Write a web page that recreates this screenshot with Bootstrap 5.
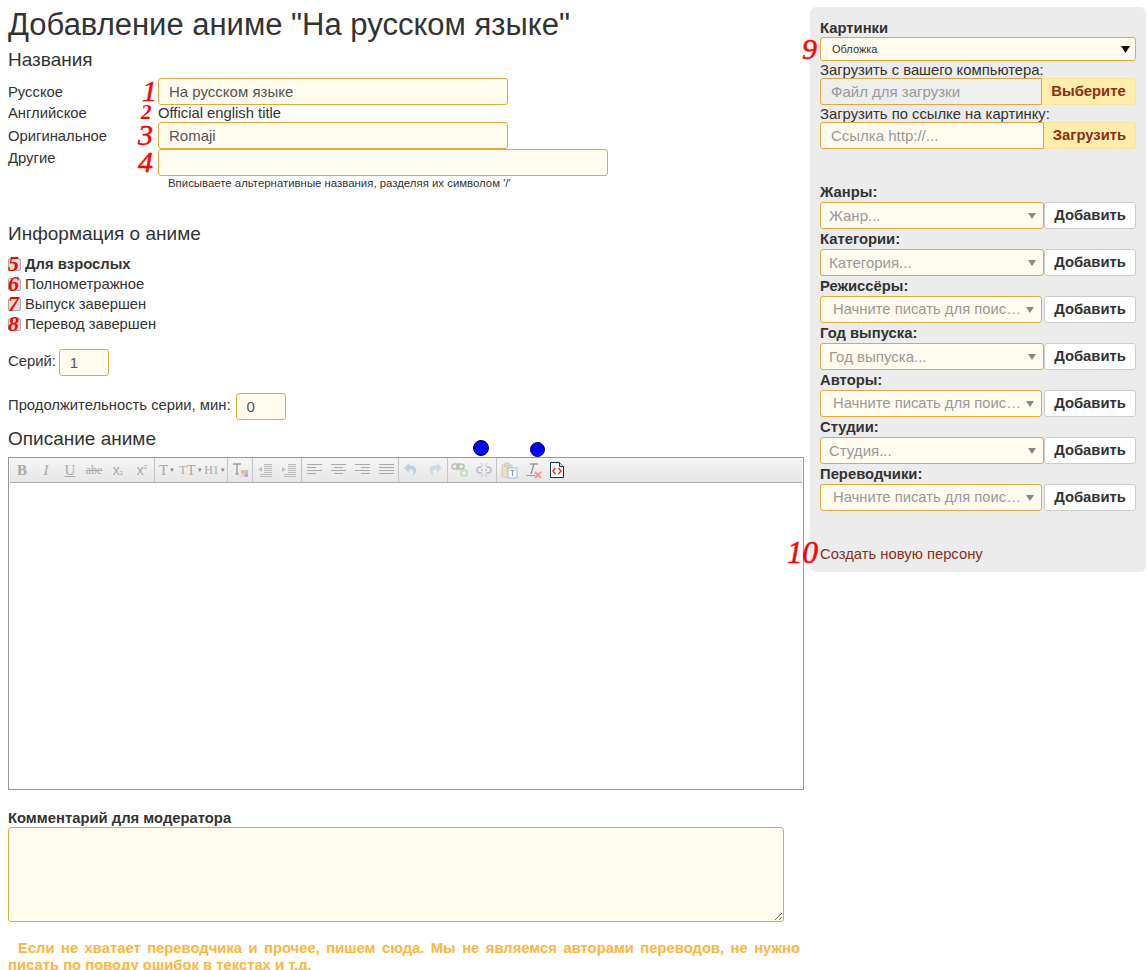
<!DOCTYPE html>
<html lang="ru">
<head>
  <meta charset="UTF-8" />
  <meta name="viewport" content="width=device-width, initial-scale=1" />
  <title>Добавление аниме</title>
  <link href="https://cdn.jsdelivr.net/npm/bootstrap@5.3.0/dist/css/bootstrap.min.css" rel="stylesheet" />
  <style>
    html, body { height: 970px; overflow: hidden; }
    body {
      font-family: "Liberation Sans", Arial, sans-serif;
      font-size: 14.8px;
      line-height: 20px;
      color: #333;
      background: #fff;
    }
    .page-wrap { width: 1147px; }
    .main-col { width: 796px; margin-left: 8px; flex: none; }
    .side-col {
      width: 336px; height: 565px; margin: 7px 0 0 6px; flex: none;
      background: #ececec; border-radius: 6px; padding: 10px 10px 0;
    }
    h1.page-title { font-size: 31px; line-height: 36px; font-weight: 400; margin: 7px 0 0; }
    .sub-title { font-size: 19px; line-height: 20px; font-weight: 400; }
    .head-names { margin: 7px 0 0; }
    .head-info { margin: 33px 0 0; }
    .head-desc { margin: 9px 0 0; }
    .fld, .fld:focus {
      background-color: #fffbef; border: 1px solid #e5a83f; border-radius: 3px;
      height: 27px; min-height: 27px; padding: 0 10px; font-size: 15px; line-height: 25px; color: #555; box-shadow: none;
    }
    .fld::placeholder { color: #999; }
    .name-row { position: relative; }
    .name-first { margin-top: 8px; }
    .name-text { height: 17px; line-height: 19px; }
    .name-label { width: 150px; flex: none; }
    .name-up { margin-top: -1px; }
    .w-short { width: 350px; flex: none !important; }
    .w-long { width: 450px; flex: none !important; }
    .num-field { width: 50px; flex: none; }
    .hint-text { font-size: 11.4px; line-height: 14px; margin: 0 0 0 160px; height: 15px; }
    .red-num { position: absolute; color: #f00; font-family: "Liberation Serif", serif; font-style: italic; font-weight: 400; line-height: 1; pointer-events: none; -webkit-text-stroke: .5px #f00; }
    .n1 { left: 134px; top: -2px; font-size: 30px; }
    .n2 { left: 133px; top: -3px; font-size: 21px; font-weight: 700; -webkit-text-stroke: 0; }
    .n3 { left: 130px; top: -2px; font-size: 30px; }
    .n4 { left: 130px; top: -2px; font-size: 30px; }
    .n5, .n6, .n7, .n8 { left: 0; top: -1px; font-size: 22px; font-weight: 700; -webkit-text-stroke: 0; }
    .n9 { left: -18px; top: -3px; font-size: 30px; }
    .n10 { left: -33px; top: -8px; font-size: 31px; }
    .chk-list { margin-top: 10px; }
    .chk-row { display: flex; align-items: center; height: 20px; position: relative; }
    .chk-box { width: 13px; height: 13px; margin: 0 4px 0 0; background: #ddd; border: 1px solid #aaa; border-radius: 2px; flex: none; }
    .ep-row { margin-top: 15px; gap: 3px; }
    .dur-row { margin-top: 17px; gap: 5px; }
    .ep-row span, .dur-row span { margin-bottom: 4px; }
    .ed-wrap { position: relative; height: 333px; width: 796px; margin-top: 8px; border: 1px solid #999; }
    .ed-bar { height: 25px; margin: 0 1px; display: flex; align-items: center; border-bottom: 1px solid #aaa; background: linear-gradient(#f6f6f6, #e6e6e6); }
    .ed-btn { width: 24px; height: 24px; display: flex; align-items: center; justify-content: center; flex: none; color: #a8a8a8; line-height: 1; }
    .ed-btn svg { display: block; }
    .ed-sep { width: 1px; height: 24px; background: #c4c4c4; flex: none; }
    .ico-serif { font-family: "Liberation Serif", serif; font-size: 15px; }
    .ico-sm { font-size: 12px; }
    .ico-x { font-size: 14px; }
    .ico-sub { font-size: 6px; align-self: flex-end; margin-bottom: 6px; }
    .ico-sup { font-size: 6px; align-self: flex-start; margin-top: 6px; }
    .ico-caret { font-size: 6px; margin-left: 1px; color: #888; }
    .blue-dot { position: absolute; border-radius: 50%; background: #00f; border: 1px solid #003; }
    .dot-a { width: 16px; height: 16px; left: 464px; top: -18px; }
    .dot-b { width: 15px; height: 15px; left: 521px; top: -16px; }
    .mod-label { font-weight: 700; line-height: 16px; margin: 20px 0 1px; }
    .mod-area, .mod-area:focus { width: 776px; height: 95px; background: #fffbef; border: 1px solid #e5a83f; border-radius: 3px; box-shadow: none; display: block; }
    .warn-text { margin: 18px 0 0; width: 792px; color: #fdb63f; font-weight: 700; line-height: 17px; text-align: justify; text-indent: 10px; }
    .side-head { font-weight: 700; line-height: 20px; height: 20px; }
    .side-first { padding-top: 1px; }
    .side-line { line-height: 19px; height: 17px; position: relative; }
    .pick-wrap { position: relative; }
    .pick-sel, .pick-sel:focus {
      background-color: #fffbef; border: 1px solid #e5a83f; border-radius: 3px; box-shadow: none;
      height: 27px; font-size: 15px; color: #999; padding: 0 18px 0 8px; line-height: 25px;
      background-image: url("data:image/svg+xml,%3Csvg xmlns='http://www.w3.org/2000/svg' width='8' height='6'%3E%3Cpath d='M0 0h8L4 6z' fill='%23888'/%3E%3C/svg%3E");
      background-repeat: no-repeat; background-position: right 7px center; background-size: 8px 6px;
    }
    .pick-sel.top-sel, .pick-sel.top-sel:focus {
      height: 24px; line-height: 22px; font-size: 11px; color: #333; padding-left: 11px;
      background-image: url("data:image/svg+xml,%3Csvg xmlns='http://www.w3.org/2000/svg' width='9' height='7'%3E%3Cpath d='M0 0h9L4.500 7z' fill='%23111'/%3E%3C/svg%3E");
      background-size: 9px 7px; background-position: right 5px center;
    }
    .pick-sel.search-sel, .pick-sel.search-sel:focus { padding-left: 12px; font-size: 14.8px; }
    .btn-add, .btn-add:hover {
      width: 92px; height: 27px; padding: 0; background: #fff; border: 1px solid #ccc; border-radius: 3px;
      font-size: 14.8px; font-weight: 700; color: #333; line-height: 25px; flex: none;
    }
    .btn-load, .btn-load:hover {
      height: 27px; padding: 0; background: #ffeeaa; border: 1px solid #fbe3a0; border-radius: 3px;
      font-size: 14.8px; font-weight: 700; color: #8b2e16; line-height: 25px; flex: none;
    }
    .w-95 { width: 95px; }
    .w-93 { width: 93px; }
    .input-group .fld { position: relative; z-index: 5; }
    .inp-disabled, .inp-disabled:focus { background-color: #eee; }
    .new-person { color: #8b2e16; text-decoration: none; }
    .search-gap { gap: 2px; }
    .spacer-33 { height: 33px; }
    .spacer-34 { height: 34px; }
  </style>
</head>
<body class="m-0">
  <div class="page-wrap d-flex align-items-start">
    <div class="main-col">
      <h1 class="page-title">Добавление аниме "На русском языке"</h1>
      <h2 class="sub-title head-names">Названия</h2>

      <div class="name-row name-first d-flex align-items-center">
        <div class="name-label">Русское</div>
        <input class="form-control fld w-short" value="На русском языке" />
        <span class="red-num n1">1</span>
      </div>
      <div class="name-row name-text d-flex align-items-center">
        <div class="name-label">Английское</div>
        <div>Official english title</div>
        <span class="red-num n2">2</span>
      </div>
      <div class="name-row d-flex align-items-center">
        <div class="name-label">Оригинальное</div>
        <input class="form-control fld w-short" value="Romaji" />
        <span class="red-num n3">3</span>
      </div>
      <div class="name-row d-flex align-items-start">
        <div class="name-label name-up">Другие</div>
        <input class="form-control fld w-long" />
        <span class="red-num n4">4</span>
      </div>
      <p class="hint-text">Вписываете альтернативные названия, разделяя их символом '/'</p>

      <h2 class="sub-title head-info">Информация о аниме</h2>
      <div class="chk-list">
        <div class="chk-row fw-bold"><span class="chk-box"></span>Для взрослых<span class="red-num n5">5</span></div>
        <div class="chk-row"><span class="chk-box"></span>Полнометражное<span class="red-num n6">6</span></div>
        <div class="chk-row"><span class="chk-box"></span>Выпуск завершен<span class="red-num n7">7</span></div>
        <div class="chk-row"><span class="chk-box"></span>Перевод завершен<span class="red-num n8">8</span></div>
      </div>

      <div class="ep-row d-flex align-items-center">
        <span>Серий:</span>
        <input class="form-control fld num-field" value="1" />
      </div>
      <div class="dur-row d-flex align-items-center">
        <span>Продолжительность серии, мин:</span>
        <input class="form-control fld num-field" value="0" />
      </div>

      <h2 class="sub-title head-desc">Описание аниме</h2>
      <div class="ed-wrap">
        <span class="blue-dot dot-a"></span>
        <span class="blue-dot dot-b"></span>
        <div class="ed-bar">
          <span class="ed-btn ico-serif fw-bold">B</span>
          <span class="ed-btn ico-serif fst-italic">I</span>
          <span class="ed-btn ico-serif text-decoration-underline">U</span>
          <span class="ed-btn ico-serif ico-sm text-decoration-line-through">abe</span>
          <span class="ed-btn ico-x">x<span class="ico-sub">2</span></span>
          <span class="ed-btn ico-x">x<span class="ico-sup">2</span></span>
          <span class="ed-sep"></span>
          <span class="ed-btn ico-serif">T<span class="ico-caret">▼</span></span>
          <span class="ed-btn ico-serif"><span class="ico-sm">T</span>T<span class="ico-caret">▼</span></span>
          <span class="ed-btn ico-serif ico-sm">H1<span class="ico-caret">▼</span></span>
          <span class="ed-sep"></span>
          <span class="ed-btn">
            <svg width="18" height="16" viewBox="0 0 18 16"><rect x="10" y="8" width="7" height="7" fill="#eee"/><rect x="10" y="8" width="3.500" height="3.500" fill="#fa8"/><rect x="13.500" y="8" width="3.500" height="3.500" fill="#9d9"/><rect x="10" y="11.500" width="3.500" height="3.500" fill="#ecd"/><rect x="13.500" y="11.500" width="3.500" height="3.500" fill="#c9e"/><path d="M2 2h8M6 2v10M4.500 12h3" stroke="#999" stroke-width="1.400" fill="none"/></svg>
          </span>
          <span class="ed-sep"></span>
          <span class="ed-btn">
            <svg width="16" height="14" viewBox="0 0 16 14"><path d="M7 1.500h8M7 3.500h8M7 5.500h8M7 7.500h8M7 9.500h8M3 11.500h12M3 13.500h12" stroke="#bbb" fill="none"/><path d="M5 4v5L1 6.500z" fill="#a8c4dc"/></svg>
          </span>
          <span class="ed-btn">
            <svg width="16" height="14" viewBox="0 0 16 14"><path d="M7 1.500h8M7 3.500h8M7 5.500h8M7 7.500h8M7 9.500h8M3 11.500h12M3 13.500h12" stroke="#bbb" fill="none"/><path d="M1 4v5l4-2.500z" fill="#a8c4dc"/></svg>
          </span>
          <span class="ed-sep"></span>
          <span class="ed-btn">
            <svg width="15" height="12" viewBox="0 0 15 12"><path d="M0 .5h15M0 3.500h9M0 6.500h15M0 9.500h9" stroke="#aaa" fill="none"/></svg>
          </span>
          <span class="ed-btn">
            <svg width="15" height="12" viewBox="0 0 15 12"><path d="M0 .5h15M3 3.500h9M0 6.500h15M3 9.500h9" stroke="#aaa" fill="none"/></svg>
          </span>
          <span class="ed-btn">
            <svg width="15" height="12" viewBox="0 0 15 12"><path d="M0 .5h15M6 3.500h9M0 6.500h15M6 9.500h9" stroke="#aaa" fill="none"/></svg>
          </span>
          <span class="ed-btn">
            <svg width="15" height="12" viewBox="0 0 15 12"><path d="M0 .5h15M0 3.500h15M0 6.500h15M0 9.500h15" stroke="#aaa" fill="none"/></svg>
          </span>
          <span class="ed-sep"></span>
          <span class="ed-btn">
            <svg width="14" height="14" viewBox="0 0 14 14"><path d="M4 3C9 1.500 13 4 12 8c-.4 2-1.800 4-4 5 1.500-2 2-4 1-5.500C8.300 6.300 6.500 6 4 7z" fill="#bcd0e6"/><path d="M5 0v10L0 5z" fill="#bcd0e6"/></svg>
          </span>
          <span class="ed-btn">
            <svg width="14" height="14" viewBox="0 0 14 14"><path d="M10 3C5 1.500 1 4 2 8c.4 2 1.800 4 4 5-1.500-2-2-4-1-5.500C5.700 6.300 7.500 6 10 7z" fill="#ccd9e8"/><path d="M9 0v10l5-5z" fill="#ccd9e8"/></svg>
          </span>
          <span class="ed-sep"></span>
          <span class="ed-btn">
            <svg width="18" height="16" viewBox="0 0 18 16"><rect x="1" y="2" width="7" height="5" rx="2.500" fill="none" stroke="#bbb" stroke-width="1.500"/><rect x="6" y="2" width="7" height="5" rx="2.500" fill="none" stroke="#bbb" stroke-width="1.500"/><circle cx="13" cy="11" r="4" fill="#c6dfbe"/><path d="M13 9v4M11 11h4" stroke="#fff"/></svg>
          </span>
          <span class="ed-btn">
            <svg width="16" height="16" viewBox="0 0 16 16"><path d="M6 5H4a3 3 0 0 0 0 6h2M10 5h2a3 3 0 0 1 0 6h-2M5 8h2M9 8h2" fill="none" stroke="#bbc" stroke-width="1.400"/><path d="M5 1l2 3M11 1L9 4M5 15l2-3M11 15l-2-3" stroke="#bcd" fill="none"/></svg>
          </span>
          <span class="ed-sep"></span>
          <span class="ed-btn">
            <svg width="17" height="17" viewBox="0 0 17 17"><rect x="1" y="3" width="10" height="12" fill="#ecdfc0" stroke="#ccc"/><rect x="4" y="1" width="4" height="3" fill="#ddd" stroke="#bbb" stroke-width=".6"/><rect x="7" y="6" width="9" height="10" fill="#f3f6fa" stroke="#a8bccc"/><path d="M9.500 8.500h4M11.500 8.500v5.500" stroke="#999" fill="none"/></svg>
          </span>
          <span class="ed-btn">
            <svg width="17" height="17" viewBox="0 0 17 17"><path d="M5 2h8M9 2 6 12" stroke="#999" stroke-width="1.500" fill="none"/><path d="M1 13.500h9" stroke="#999" fill="none"/><path d="M10 10l6 6M16 10l-6 6" stroke="#e99" stroke-width="2" fill="none"/></svg>
          </span>
          <span class="ed-btn">
            <svg width="14" height="16" viewBox="0 0 14 16"><path d="M.5.5h9l4 4v11H.5z" fill="#fff" stroke="#134"/><path d="M9.500.5v4h4" fill="#cde" stroke="#134"/><path d="M5.500 6 3 9l2.500 3M8.500 6 11 9l-2.500 3" stroke="#d22" stroke-width="1.300" fill="none"/></svg>
          </span>
        </div>
      </div>

      <div class="mod-label">Комментарий для модератора</div>
      <textarea class="form-control mod-area"></textarea>
      <p class="warn-text">Если не хватает переводчика и прочее, пишем сюда. Мы не являемся авторами переводов, не нужно писать по поводу ошибок в текстах и т.д.</p>
    </div>

    <div class="side-col">
      <div class="side-head side-first">Картинки</div>
      <div class="pick-wrap">
        <select class="form-select pick-sel top-sel"><option>Обложка</option></select>
        <span class="red-num n9">9</span>
      </div>
      <div class="side-line">Загрузить с вашего компьютера:</div>
      <div class="input-group flex-nowrap">
        <input class="form-control fld inp-disabled" placeholder="Файл для загрузки" />
        <button class="btn btn-load w-95" type="button">Выберите</button>
      </div>
      <div class="side-line">Загрузить по ссылке на картинку:</div>
      <div class="input-group flex-nowrap">
        <input class="form-control fld" placeholder="Ссылка http://..." />
        <button class="btn btn-load w-93" type="button">Загрузить</button>
      </div>
      <div class="spacer-33"></div>

      <div class="side-head">Жанры:</div>
      <div class="d-flex"><select class="form-select pick-sel"><option>Жанр...</option></select><button class="btn btn-add" type="button">Добавить</button></div>
      <div class="side-head">Категории:</div>
      <div class="d-flex"><select class="form-select pick-sel"><option>Категория...</option></select><button class="btn btn-add" type="button">Добавить</button></div>
      <div class="side-head">Режиссёры:</div>
      <div class="d-flex search-gap"><select class="form-select pick-sel search-sel"><option>Начните писать для поис…</option></select><button class="btn btn-add" type="button">Добавить</button></div>
      <div class="side-head">Год выпуска:</div>
      <div class="d-flex"><select class="form-select pick-sel"><option>Год выпуска...</option></select><button class="btn btn-add" type="button">Добавить</button></div>
      <div class="side-head">Авторы:</div>
      <div class="d-flex search-gap"><select class="form-select pick-sel search-sel"><option>Начните писать для поис…</option></select><button class="btn btn-add" type="button">Добавить</button></div>
      <div class="side-head">Студии:</div>
      <div class="d-flex"><select class="form-select pick-sel"><option>Студия...</option></select><button class="btn btn-add" type="button">Добавить</button></div>
      <div class="side-head">Переводчики:</div>
      <div class="d-flex search-gap"><select class="form-select pick-sel search-sel"><option>Начните писать для поис…</option></select><button class="btn btn-add" type="button">Добавить</button></div>
      <div class="spacer-34"></div>
      <div class="side-line"><a class="new-person" href="#">Создать новую персону</a><span class="red-num n10">10</span></div>
    </div>
  </div>
</body>
</html>
